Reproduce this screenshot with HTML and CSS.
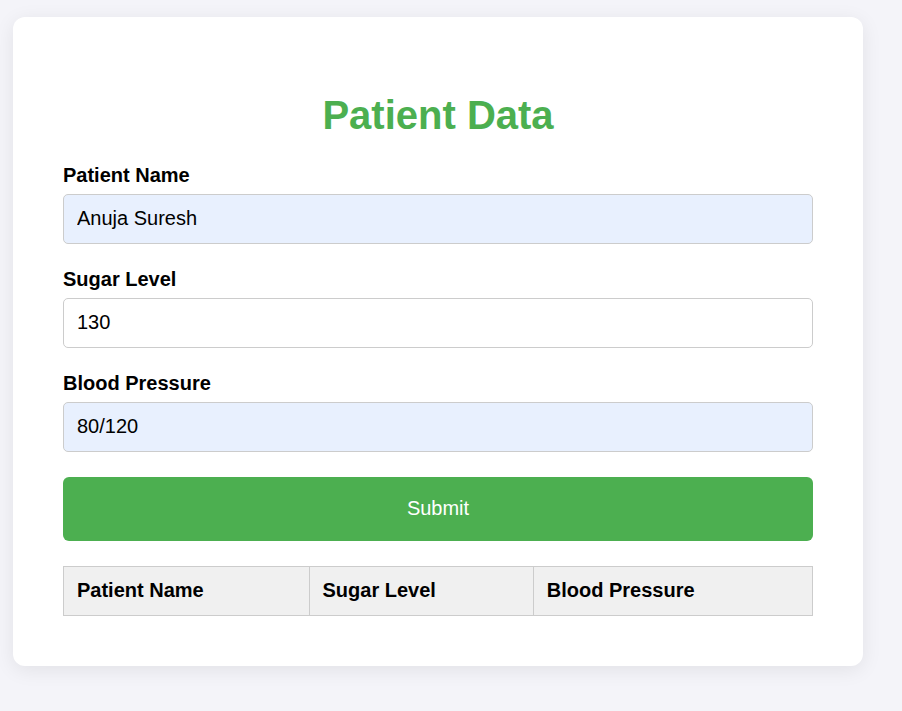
FILE: index.html
```html
<!DOCTYPE html>
<html lang="en">
<head>
<meta charset="utf-8">
<title>Patient Data</title>
<link rel="stylesheet" href="styles.css">
</head>
<body>
  <div class="card">
    <h1 class="title">Patient Data</h1>
    <form class="form">
      <label class="label" for="name">Patient Name</label>
      <input class="input input-filled" id="name" type="text" value="Anuja Suresh">
      <label class="label" for="sugar">Sugar Level</label>
      <input class="input" id="sugar" type="text" value="130">
      <label class="label" for="bp">Blood Pressure</label>
      <input class="input input-filled" id="bp" type="text" value="80/120">
      <button class="submit" type="button">Submit</button>
    </form>
    <table class="table">
      <thead>
        <tr>
          <th>Patient Name</th>
          <th>Sugar Level</th>
          <th>Blood Pressure</th>
        </tr>
      </thead>
      <tbody></tbody>
    </table>
  </div>
</body>
</html>
```
FILE: styles.css
```css
* { box-sizing: border-box; }
html, body { margin: 0; }
body {
  background: #f4f4f9;
  font-family: "Liberation Sans", Arial, sans-serif;
  padding: 17px 0 0 13px;
  min-height: 711px;
}
.card {
  width: 850px;
  background: #fff;
  border-radius: 12px;
  box-shadow: 0 4px 20px rgba(0, 0, 0, 0.08);
  padding: 75px 50px 50px;
}
.title {
  margin: 0 0 26px;
  text-align: center;
  color: #4caf50;
  font-size: 40px;
  font-weight: bold;
  line-height: 46px;
}
.form {
  display: flex;
  flex-direction: column;
}
.label {
  font-size: 20px;
  font-weight: bold;
  line-height: 23px;
  color: #000;
  margin-bottom: 7px;
}
.input {
  height: 50px;
  padding: 0 13px 2px;
  border: 1px solid #ccc;
  border-radius: 5px;
  font-family: "Liberation Sans", Arial, sans-serif;
  font-size: 20px;
  color: #000;
  background: #fff;
  margin: 0 0 24px;
}
.input:last-of-type { margin-bottom: 25px; }
.input-filled { background: #e8f0fe; }
.submit {
  height: 64px;
  padding: 0 0 2px;
  border: none;
  border-radius: 6px;
  background: #4caf50;
  color: #fff;
  font-family: "Liberation Sans", Arial, sans-serif;
  font-size: 20px;
  cursor: pointer;
}
.table {
  width: 100%;
  margin-top: 25px;
  border-collapse: collapse;
}
.table th {
  background: #f0f0f0;
  border: 1px solid #ccc;
  padding: 11px 13px 13px;
  font-size: 20px;
  line-height: 24px;
  text-align: left;
  color: #000;
}
```
